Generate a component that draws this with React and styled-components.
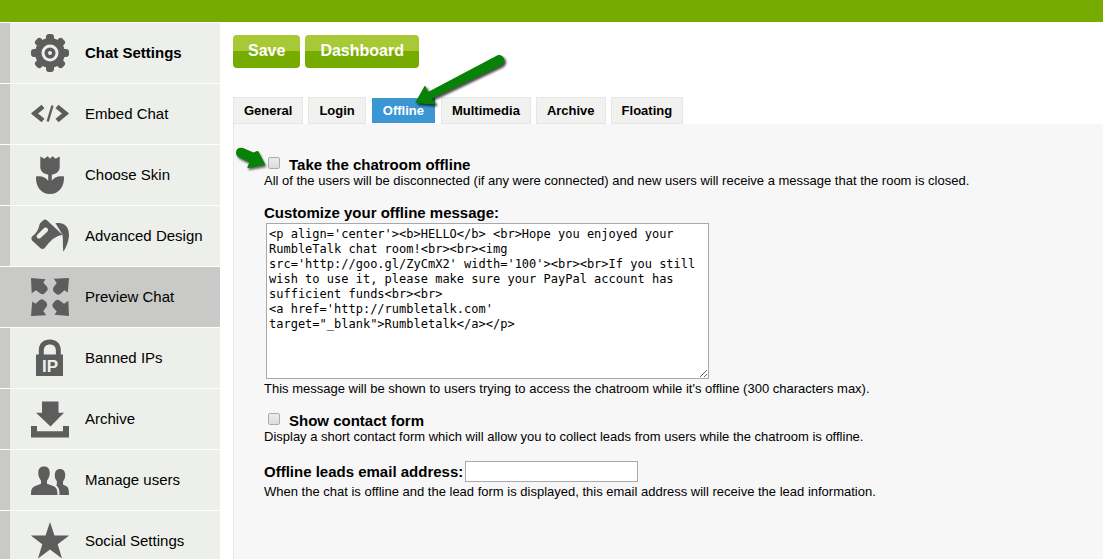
import React from 'react';
import styled, { createGlobalStyle } from 'styled-components';

const GlobalStyle = createGlobalStyle`
  * { box-sizing: border-box; }
  body {
    margin: 0;
    background: #fff;
    color: #000;
    font-family: Arial, "Liberation Sans", sans-serif;
    font-size: 13px;
  }
`;

const Page = styled.div`
  display: flex;
  flex-direction: column;
  height: 100vh;
  overflow: hidden;
`;

const TopBar = styled.header`
  flex: none;
  height: 22px;
  background: #76ab00;
`;

const Body = styled.div`
  display: flex;
  flex: 1;
  min-height: 0;
`;

const Sidebar = styled.nav`
  display: flex;
  flex: none;
  flex-direction: column;
  gap: 1px;
  width: 220px;
  padding-top: 1px;
  overflow: hidden;
`;

const NavItem = styled.a`
  display: flex;
  flex: none;
  align-items: center;
  gap: 15px;
  height: 60px;
  padding-left: 20px;
  border-left: 10px solid #c9c9c7;
  background: ${(p) => (p.$selected ? '#c9c9c7' : '#edefea')};
  color: #000;
  font-size: 15px;
  font-weight: ${(p) => (p.$bold ? 700 : 400)};
  text-decoration: none;
`;

const NavLabel = styled.span`
  padding-bottom: 2px;
`;

const NavIcon = styled.svg`
  flex: none;
  width: 40px;
  height: 40px;
  fill: #5d5d5d;
`;

const Main = styled.main`
  display: flex;
  flex: 1;
  flex-direction: column;
  min-width: 0;
  padding: 13px 0 0 13px;
`;

const Actions = styled.div`
  display: flex;
  gap: 5px;
  margin-bottom: 29px;
`;

const ActionButton = styled.button`
  height: 33px;
  padding: 0 15px 2px;
  border: 0;
  border-radius: 4px;
  background: linear-gradient(#a8c936 50%, #76ab00 50%);
  color: #fff;
  font: bold 16px Arial, "Liberation Sans", sans-serif;
`;

const Tabs = styled.div`
  position: relative;
  display: flex;
  gap: 5px;
`;

const Tab = styled.button`
  height: 27px;
  padding: 0 ${(p) => (p.$active ? 11 : 10)}px;
  border: 1px solid ${(p) => (p.$active ? '#fff' : '#e6e6e6')};
  background: ${(p) => (p.$active ? '#3a97d4' : '#f1f1ef')};
  color: ${(p) => (p.$active ? '#fff' : '#000')};
  font: bold 13px Arial, "Liberation Sans", sans-serif;
`;

const Panel = styled.form`
  display: flex;
  flex: 1;
  flex-direction: column;
  align-items: flex-start;
  gap: 16px;
  padding: 33px 30px;
  border-left: 1px solid #e6e6e6;
  background: #f7f7f7;
`;

const Field = styled.section`
  width: 100%;
`;

const CheckRow = styled.div`
  position: relative;
  display: flex;
  align-items: center;
  gap: 9px;
  height: 16px;
  padding-left: 4px;
`;

const Label = styled.label`
  display: block;
  font-size: 15px;
  font-weight: 700;
  line-height: 16px;
`;

const Checkbox = styled.input`
  appearance: none;
  width: 12px;
  height: 12px;
  margin: 0 0 4px;
  border: 1px solid #adadad;
  border-radius: 2px;
  background: linear-gradient(#ececec, #dcdcdc);
`;

const Hint = styled.p`
  margin: 0;
  line-height: 16px;
`;

const Message = styled.textarea`
  display: block;
  width: 443px;
  max-width: 100%;
  height: 156px;
  margin: 2px 0 2px 2px;
  padding: 3px 8px 2px 2px;
  border: 1px solid #a9a9a9;
  border-radius: 0;
  background: #fff;
  color: #000;
  font: 12px/15px Consolas, "DejaVu Sans Mono", monospace;
`;

const EmailRow = styled.div`
  display: flex;
  align-items: center;
  gap: 2px;
  margin-bottom: 2px;
`;

const EmailInput = styled.input`
  width: 173px;
  height: 21px;
  padding: 1px 2px;
  border: 1px solid #a9a9a9;
  background: #fff;
`;

const TabArrow = styled.svg`
  position: absolute;
  left: 177px;
  top: -47px;
  width: 100px;
  height: 64px;
  pointer-events: none;
  filter: drop-shadow(2px 2px 1px rgba(0, 0, 0, 0.7));
`;

const CheckArrow = styled.svg`
  position: absolute;
  left: -30px;
  top: -11px;
  width: 34px;
  height: 24px;
  overflow: visible;
  pointer-events: none;
  filter: drop-shadow(1px 2px 1px rgba(0, 0, 0, 0.6));
`;

const toothAngles = [0, 45, 90, 135, 180, 225, 270, 315];

const icons = {
  gear: (
    <>
      <path fillRule="evenodd" d="M20 5a15 15 0 1 0 0 30a15 15 0 1 0 0-30zM20 11.500a8.500 8.500 0 1 1 0 17a8.500 8.500 0 1 1 0-17z" />
      {toothAngles.map((a) => (
        <rect key={a} x="16" y="1" width="8" height="9" rx="3" transform={`rotate(${a} 20 20)`} />
      ))}
      <path fillRule="evenodd" d="M20 14.500a5.500 5.500 0 1 0 0 11a5.500 5.500 0 1 0 0-11zM20 18a2 2 0 1 1 0 4a2 2 0 1 1 0-4z" />
    </>
  ),
  code: (
    <g fill="none" stroke="#5d5d5d">
      <path strokeWidth="4.600" d="M13 12.500L4.500 19.500l8.500 7M27 12.500L35.500 19.500l-8.500 7" />
      <path strokeWidth="2.400" d="M22.500 11.500L17.700 27.500" />
    </g>
  ),
  flower: (
    <path d="M10.300 1.500l4.200 2.300L17 1.500h1l2 2.200L22 1.500h1l2.500 2.300 4.200-2.300V12c0 4.500-3.500 7-7.900 7.700V26C23.500 22.500 29 20.500 34 21.500c.5 10-5 17.500-14 17.500S5.500 31.500 6 21.500c5-1 10.500 1 12.200 4.500v-6.300c-4.400-.7-7.900-3.200-7.900-7.700z" />
  ),
  bucket: (
    <>
      <path fillRule="evenodd" d="M13 4.500q2-2 4.500.3l15 14q-9 1-18 13.500-2 1.500-4 0l-8.700-8q-1.500-2 .5-4c4-3 6-6 7-11q1-3 3.700-4.800zM13.500 12.500L7.300 18.800c-2 2.200 1 5 3.200 3.200l6.800-6.300c2.300-2.500-1.300-5.700-3.800-3.200z" />
      <path d="M25.500 7.300C34 6 38.500 10 39 18.500c0 6-2.500 12.500-5.700 17.300-.7-5.500 0-11-.8-17z" />
    </>
  ),
  expand: (
    <>
      {[0, 90, 180, 270].map((a) => (
        <path key={a} transform={`rotate(${a} 20 20)`} d="M1 1l14.500 1.200-2.200 3.400 3.700 4.200q1.500 2.200 0 4l-2.500 2.700q-2.300 1.500-4.500-.2L6 13.300l-4.300 2.900z" />
      ))}
    </>
  ),
  lock: (
    <>
      <path d="M6 16.500h2.800V12C9 5 13.500 1.500 19.800 1.500S30.600 5 30.800 12v4.500H33V38H6zM13.800 16.500h12.100V12.500c0-4-2.500-6-6-6s-6.100 2-6.100 6z" />
      <text x="20" y="34" textAnchor="middle" fill="#edefea" fontFamily="Liberation Sans, sans-serif" fontSize="17" fontWeight="700">IP</text>
    </>
  ),
  download: <path d="M12 2.500h16.500v11.200H34L20.500 27.500 6 13.700h6zM1 27h6v5.200h26V27h6v11.500H1z" />,
  users: (
    <>
      <path d="M1 35c0-6 1-8 5-9.300l5-2v-3C9 18 8 15 8.300 12 8.500 8.500 10.500 6.500 14 6.500s5.500 2 5.700 5.500c.3 3-.7 6-2.700 8.700v3l5.500 2c4 1.300 5 3.300 5 9.300z" />
      <path d="M30 9c3.500 0 5.200 2.500 5.200 6.200 0 3-1 4.800-2.200 6.300v3l3.500 1.700C38.500 27.500 39 30 39 35h-9.500c0-5-.5-7.500-3-9.300L27 21.500c-1.200-1.500-2.200-3.300-2.200-6.300C24.800 11.500 26.500 9 30 9z" />
    </>
  ),
  star: <path d="M20 1l4.500 13.500H39.200L27.700 23.300 32 37.500 20 28.500 8 37.500l4.300-14.200L.8 14.500h14.700z" />,
};

const navItems = [
  { icon: 'gear', label: 'Chat Settings', bold: true },
  { icon: 'code', label: 'Embed Chat' },
  { icon: 'flower', label: 'Choose Skin' },
  { icon: 'bucket', label: 'Advanced Design' },
  { icon: 'expand', label: 'Preview Chat', selected: true },
  { icon: 'lock', label: 'Banned IPs' },
  { icon: 'download', label: 'Archive' },
  { icon: 'users', label: 'Manage users' },
  { icon: 'star', label: 'Social Settings' },
];

const tabs = ['General', 'Login', 'Offline', 'Multimedia', 'Archive', 'Floating'];

const offlineMessage = `<p align='center'><b>HELLO</b> <br>Hope you enjoyed your RumbleTalk chat room!<br><br><img src='http://goo.gl/ZyCmX2' width='100'><br><br>If you still wish to use it, please make sure your PayPal account has sufficient funds<br><br>
<a href='http://rumbletalk.com' target="_blank">Rumbletalk</a></p>`;

export default function App() {
  return (
    <Page>
      <GlobalStyle />
      <TopBar />
      <Body>
        <Sidebar>
          {navItems.map((item) => (
            <NavItem key={item.label} href="#" $bold={item.bold} $selected={item.selected}>
              <NavIcon viewBox="0 0 40 40" aria-hidden="true">{icons[item.icon]}</NavIcon>
              <NavLabel>{item.label}</NavLabel>
            </NavItem>
          ))}
        </Sidebar>
        <Main>
          <Actions>
            <ActionButton type="button">Save</ActionButton>
            <ActionButton type="button">Dashboard</ActionButton>
          </Actions>
          <Tabs>
            {tabs.map((tab) => (
              <Tab key={tab} type="button" $active={tab === 'Offline'}>{tab}</Tab>
            ))}
            <TabArrow viewBox="0 0 100 64" aria-hidden="true">
              <path fill="#078207" d="M5 53L14.500 36q1-.5 1.500 1l2 5L87 5.500c6-2.500 10.500 6 4 10L22 48.500l3 4q.5 1.500-1 2z" />
            </TabArrow>
          </Tabs>
          <Panel>
            <Field>
              <CheckRow>
                <Checkbox id="take-offline" type="checkbox" />
                <Label htmlFor="take-offline">Take the chatroom offline</Label>
                <CheckArrow viewBox="0 0 34 24" aria-hidden="true">
                  <path fill="#078207" d="M2 6.500C2 3 5 1 9 2l10.500 4.500L23 5q1-.3 1.500.5L31.500 19 14.500 22q-1.500 0-1-1.500l2-4L6 12C3.500 10.500 2 9 2 6.500z" />
                </CheckArrow>
              </CheckRow>
              <Hint>All of the users will be disconnected (if any were connected) and new users will receive a message that the room is closed.</Hint>
            </Field>
            <Field>
              <Label htmlFor="offline-message">Customize your offline message:</Label>
              <Message id="offline-message" spellCheck={false} defaultValue={offlineMessage} />
              <Hint>This message will be shown to users trying to access the chatroom while it's offline (300 characters max).</Hint>
            </Field>
            <Field>
              <CheckRow>
                <Checkbox id="contact-form" type="checkbox" />
                <Label htmlFor="contact-form">Show contact form</Label>
              </CheckRow>
              <Hint>Display a short contact form which will allow you to collect leads from users while the chatroom is offline.</Hint>
            </Field>
            <Field>
              <EmailRow>
                <Label htmlFor="leads-email">Offline leads email address:</Label>
                <EmailInput id="leads-email" type="email" />
              </EmailRow>
              <Hint>When the chat is offline and the lead form is displayed, this email address will receive the lead information.</Hint>
            </Field>
          </Panel>
        </Main>
      </Body>
    </Page>
  );
}
